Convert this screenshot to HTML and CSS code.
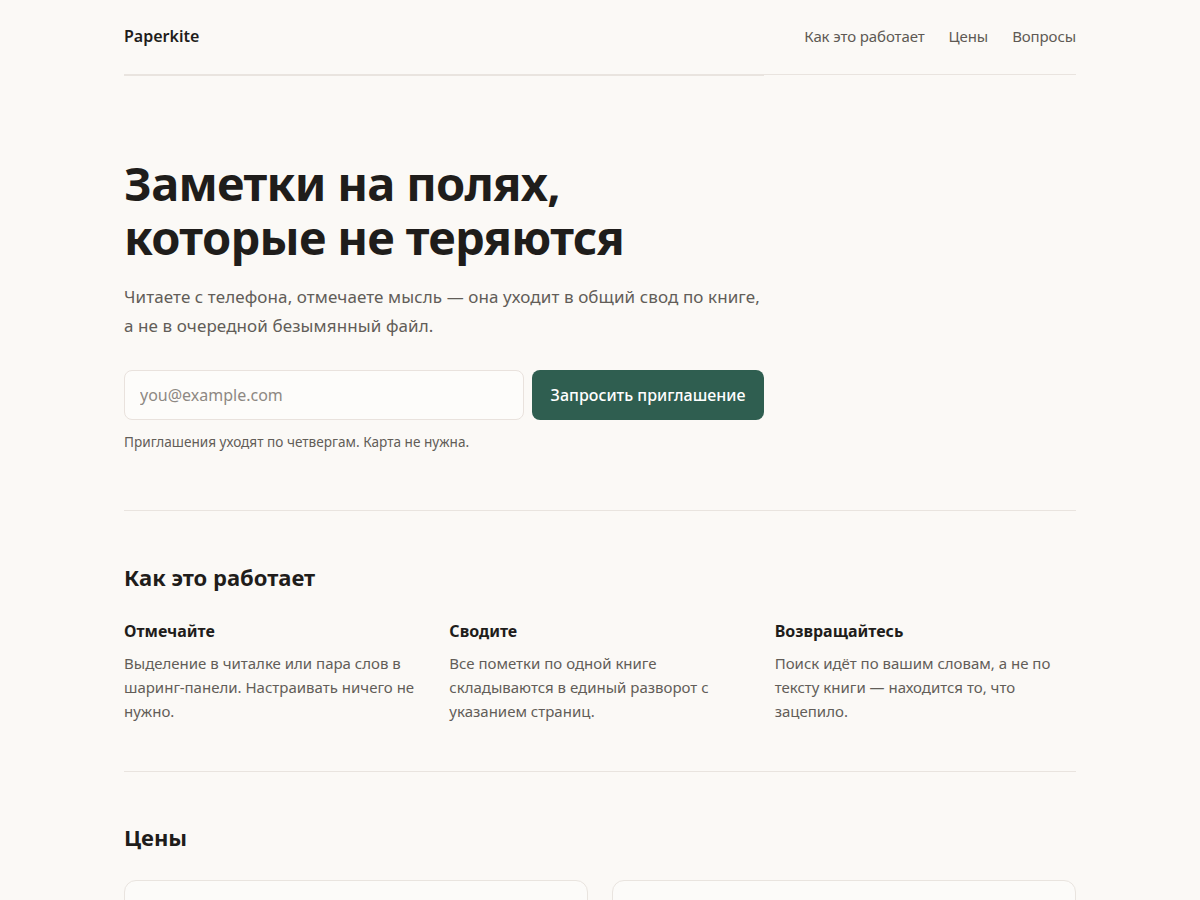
FILE: index.html
```html
<!DOCTYPE html>
<html lang="ru">
<head>
<meta charset="utf-8">
<title>Paperkite</title>
<link rel="stylesheet" href="styles.css">
</head>
<body>
<div class="page">
  <header class="header">
    <div class="brand">Paperkite</div>
    <nav class="nav">
      <a href="#how">Как это работает</a>
      <a href="#prices">Цены</a>
      <a href="#faq">Вопросы</a>
    </nav>
  </header>
  <section class="hero">
    <h1 class="hero-title">Заметки на полях,<br>которые не теряются</h1>
    <p class="hero-sub">Читаете с телефона, отмечаете мысль — она уходит в общий свод по книге, а не в очередной безымянный файл.</p>
    <form class="invite">
      <input class="invite-input" type="email" placeholder="you@example.com">
      <button class="invite-btn" type="button">Запросить приглашение</button>
    </form>
    <p class="hero-note">Приглашения уходят по четвергам. Карта не нужна.</p>
  </section>
  <section class="section" id="how">
    <h2 class="section-title">Как это работает</h2>
    <div class="steps">
      <div class="step">
        <h3 class="step-title">Отмечайте</h3>
        <p class="step-text">Выделение в читалке или пара слов в шаринг-панели. Настраивать ничего не нужно.</p>
      </div>
      <div class="step">
        <h3 class="step-title">Сводите</h3>
        <p class="step-text">Все пометки по одной книге складываются в единый разворот с указанием страниц.</p>
      </div>
      <div class="step">
        <h3 class="step-title">Возвращайтесь</h3>
        <p class="step-text">Поиск идёт по вашим словам, а не по тексту книги — находится то, что зацепило.</p>
      </div>
    </div>
  </section>
  <section class="section section-last" id="prices">
    <h2 class="section-title">Цены</h2>
    <div class="plans">
      <div class="plan"></div>
      <div class="plan"></div>
    </div>
  </section>
</div>
</body>
</html>
```

FILE: styles.css
```css
* { box-sizing: border-box; }
html, body { margin: 0; padding: 0; }
body {
  background: #fbf9f6;
  color: #1f1d1b;
  font-family: "Noto Sans", "Open Sans", sans-serif;
}
.page {
  width: 952px;
  margin: 0 auto;
}
.header {
  height: 75px;
  padding-bottom: 2px;
  display: flex;
  align-items: center;
  justify-content: space-between;
  border-bottom: 1px solid #e9e4df;
}
.brand {
  font-size: 16px;
  font-weight: 600;
  color: #1f1d1b;
}
.nav {
  display: flex;
  gap: 24px;
}
.nav a {
  font-size: 15px;
  letter-spacing: -0.1px;
  color: #5e5954;
  text-decoration: none;
}
.hero {
  width: 640px;
  border-top: 1px solid #e9e4df;
  padding: 80px 0 58px;
}
.hero-title {
  margin: 0 0 18px;
  font-size: 47px;
  line-height: 54px;
  font-weight: 700;
  letter-spacing: -0.7px;
  color: #1f1d1b;
}
.hero-sub {
  margin: 0 0 30px;
  font-size: 17px;
  line-height: 29px;
  letter-spacing: 0.1px;
  color: #625d58;
}
.invite {
  display: flex;
  gap: 8px;
  margin: 0 0 12px;
}
.invite-input {
  width: 400px;
  height: 50px;
  border: 1px solid #e9e2dd;
  border-radius: 8px;
  background: #fdfcfa;
  padding: 0 15px;
  font-family: inherit;
  font-size: 16px;
  color: #1f1d1b;
}
.invite-input::placeholder { color: #8d8883; }
.invite-btn {
  width: 232px;
  height: 50px;
  border: none;
  border-radius: 8px;
  background: #2f5e50;
  color: #fff;
  font-family: inherit;
  font-size: 16px;
  font-weight: 500;
}
.hero-note {
  margin: 0;
  font-size: 13.6px;
  line-height: 20px;
  color: #625d58;
}
.section {
  border-top: 1px solid #e9e4df;
  padding: 52px 0 48px;
}
.section-last {
  padding-top: 51px;
}
.section-title {
  margin: 0 0 28px;
  font-size: 22px;
  line-height: 29px;
  font-weight: 700;
  color: #1f1d1b;
}
.steps {
  display: grid;
  grid-template-columns: repeat(3, 1fr);
  gap: 24px;
}
.step-title {
  margin: 0 0 9px;
  font-size: 16px;
  line-height: 22px;
  font-weight: 700;
  color: #1f1d1b;
}
.step-text {
  margin: 0;
  font-size: 15px;
  line-height: 24px;
  color: #625d58;
}
.plans {
  display: grid;
  grid-template-columns: 1fr 1fr;
  gap: 24px;
}
.plan {
  height: 200px;
  border: 1px solid #e9e4df;
  border-radius: 12px;
  background: #fcfbf9;
}
```
